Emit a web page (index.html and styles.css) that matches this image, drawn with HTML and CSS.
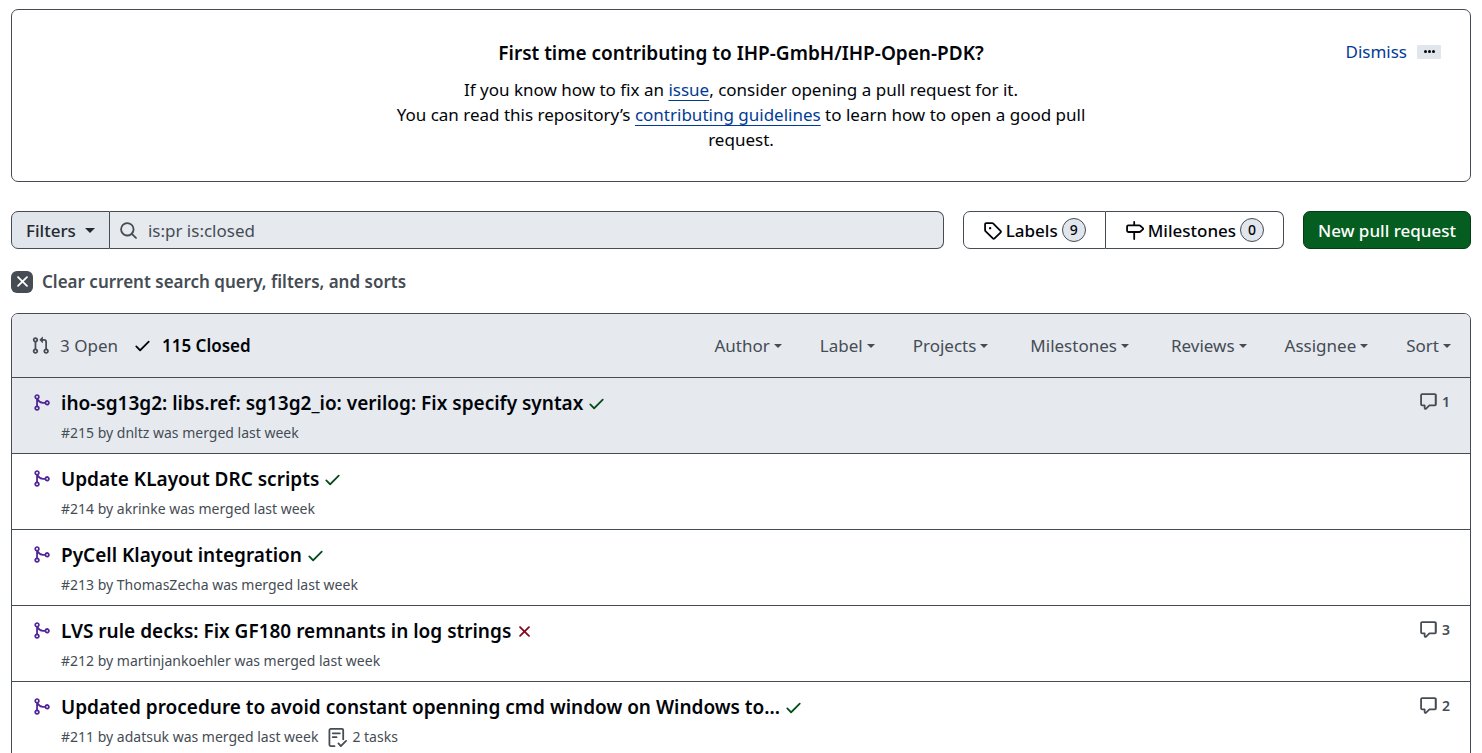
FILE: index.html
```html
<!DOCTYPE html>
<html lang="en">
<head>
<meta charset="utf-8">
<title>Pull requests · IHP-GmbH/IHP-Open-PDK</title>
<link rel="stylesheet" href="styles.css">
</head>
<body>
<svg class="sprite" aria-hidden="true">
  <symbol id="tag" viewBox="0 0 16 16"><path d="M1 7.775V2.75C1 1.784 1.784 1 2.75 1h5.025c.464 0 .91.184 1.238.513l6.25 6.25a1.75 1.75 0 0 1 0 2.474l-5.026 5.026a1.75 1.75 0 0 1-2.474 0l-6.25-6.25A1.752 1.752 0 0 1 1 7.775Zm1.5 0c0 .066.026.13.073.177l6.25 6.25a.25.25 0 0 0 .354 0l5.025-5.025a.25.25 0 0 0 0-.354l-6.25-6.25a.25.25 0 0 0-.177-.073H2.75a.25.25 0 0 0-.25.25ZM6 5a1 1 0 1 1 0 2 1 1 0 0 1 0-2Z"/></symbol>
  <symbol id="milestone" viewBox="0 0 16 16"><path d="M7.75 0a.75.75 0 0 1 .75.75V3h3.634c.414 0 .814.147 1.13.414l2.07 1.75a1.75 1.75 0 0 1 0 2.672l-2.07 1.75a1.75 1.75 0 0 1-1.13.414H8.5v5.25a.75.75 0 0 1-1.5 0V10H2.75A1.75 1.75 0 0 1 1 8.25v-3.5C1 3.784 1.784 3 2.75 3H7V.75A.75.75 0 0 1 7.75 0Zm4.384 8.5a.25.25 0 0 0 .161-.06l2.07-1.75a.248.248 0 0 0 0-.38l-2.07-1.75a.25.25 0 0 0-.161-.06H2.75a.25.25 0 0 0-.25.25v3.5c0 .138.112.25.25.25h9.384Z"/></symbol>
  <symbol id="search" viewBox="0 0 16 16"><path d="M10.68 11.74a6 6 0 0 1-7.922-8.982 6 6 0 0 1 8.982 7.922l3.04 3.04a.749.749 0 0 1-.326 1.275.749.749 0 0 1-.734-.215ZM11.5 7a4.499 4.499 0 1 0-8.997 0A4.499 4.499 0 0 0 11.5 7Z"/></symbol>
  <symbol id="x" viewBox="0 0 16 16"><path d="M3.72 3.72a.75.75 0 0 1 1.06 0L8 6.94l3.22-3.22a.749.749 0 0 1 1.275.326.749.749 0 0 1-.215.734L9.06 8l3.22 3.22a.749.749 0 0 1-.326 1.275.749.749 0 0 1-.734-.215L8 9.06l-3.22 3.22a.751.751 0 0 1-1.042-.018.751.751 0 0 1-.018-1.042L6.94 8 3.72 4.78a.75.75 0 0 1 0-1.06Z"/></symbol>
  <symbol id="check" viewBox="0 0 16 16"><path d="M13.78 4.22a.75.75 0 0 1 0 1.06l-7.25 7.25a.75.75 0 0 1-1.06 0L2.22 9.28a.751.751 0 0 1 .018-1.042.751.751 0 0 1 1.042-.018L6 10.94l6.72-6.72a.75.75 0 0 1 1.06 0Z"/></symbol>
  <symbol id="pull" viewBox="0 0 16 16"><path d="M1.5 3.25a2.25 2.25 0 1 1 3 2.122v5.256a2.251 2.251 0 1 1-1.5 0V5.372A2.25 2.25 0 0 1 1.5 3.25Zm5.677-.177L9.573.677A.25.25 0 0 1 10 .854V2.5h1A2.5 2.5 0 0 1 13.5 5v5.628a2.251 2.251 0 1 1-1.5 0V5a1 1 0 0 0-1-1h-1v1.646a.25.25 0 0 1-.427.177L7.177 3.427a.25.25 0 0 1 0-.354ZM3.75 2.5a.75.75 0 1 0 0 1.5.75.75 0 0 0 0-1.5Zm0 9.5a.75.75 0 1 0 0 1.5.75.75 0 0 0 0-1.5Zm8.25.75a.75.75 0 1 0 1.5 0 .75.75 0 0 0-1.5 0Z"/></symbol>
  <symbol id="merge" viewBox="0 0 16 16"><path d="M5.45 5.154A4.25 4.25 0 0 0 9.25 7.5h1.378a2.251 2.251 0 1 1 0 1.5H9.25A5.734 5.734 0 0 1 5 7.123v3.505a2.25 2.25 0 1 1-1.5 0V5.372a2.25 2.25 0 1 1 1.95-.218ZM4.25 13.5a.75.75 0 1 0 0-1.5.75.75 0 0 0 0 1.5Zm8.5-4.5a.75.75 0 1 0 0-1.5.75.75 0 0 0 0 1.5ZM5 3.25a.75.75 0 1 0 0 .005V3.25Z"/></symbol>
  <symbol id="comment" viewBox="0 0 16 16"><path d="M1 2.75C1 1.784 1.784 1 2.75 1h10.5c.966 0 1.75.784 1.75 1.75v7.5A1.75 1.75 0 0 1 13.25 12H9.06l-2.573 2.573A1.458 1.458 0 0 1 4 13.543V12H2.75A1.75 1.75 0 0 1 1 10.25Zm1.75-.25a.25.25 0 0 0-.25.25v7.5c0 .138.112.25.25.25h2a.75.75 0 0 1 .75.75v2.19l2.72-2.72a.749.749 0 0 1 .53-.22h4.25a.25.25 0 0 0 .25-.25v-7.5a.25.25 0 0 0-.25-.25Z"/></symbol>
  <symbol id="tasks" viewBox="0 0 16 16"><path d="M5.5 15.2H2.2a1 1 0 0 1-1-1V1.8a1 1 0 0 1 1-1h9.6a1 1 0 0 1 1 1v7.7M4 4.5h6M4 7.7h3.2M8.8 13l2 2.2 4.4-4.4" fill="none" stroke="currentColor" stroke-width="1.5" stroke-linecap="round" stroke-linejoin="round"/></symbol>
</svg>

<section class="notice">
  <div class="notice-actions">
    <button class="link-button" type="button">Dismiss</button>
    <button class="more" type="button" aria-label="More options"><i></i><i></i><i></i></button>
  </div>
  <div class="notice-body">
    <h3>First time contributing to IHP-GmbH/IHP-Open-PDK?</h3>
    <p>If you know how to fix an <a href="#issues">issue</a>, consider opening a pull request for it.</p>
    <p>You can read this repository’s <a href="#contributing">contributing guidelines</a> to learn how to open a good pull request.</p>
  </div>
</section>

<div class="toolbar">
  <form class="search">
    <button class="filters" type="button">Filters <span class="caret"></span></button>
    <div class="search-field">
      <svg class="icon"><use href="#search"/></svg>
      <input type="text" value="is:pr is:closed" aria-label="Search all issues">
    </div>
  </form>
  <nav class="subnav">
    <a href="#labels"><svg class="icon"><use href="#tag"/></svg>Labels <span class="counter">9</span></a>
    <a href="#milestones"><svg class="icon"><use href="#milestone"/></svg>Milestones <span class="counter">0</span></a>
  </nav>
  <button class="primary" type="button">New pull request</button>
</div>

<a class="clear" href="#clear"><span class="clear-icon"><svg class="icon"><use href="#x"/></svg></span>Clear current search query, filters, and sorts</a>

<main class="list">
  <header class="list-head">
    <nav class="states">
      <a href="#open"><svg class="icon"><use href="#pull"/></svg>3 Open</a>
      <a class="selected" href="#closed"><svg class="icon"><use href="#check"/></svg>115 Closed</a>
    </nav>
    <div class="menus">
      <button type="button">Author<span class="caret"></span></button>
      <button type="button">Label<span class="caret"></span></button>
      <button type="button">Projects<span class="caret"></span></button>
      <button class="spaced" type="button">Milestones<span class="caret"></span></button>
      <button type="button">Reviews<span class="caret"></span></button>
      <button type="button">Assignee<span class="caret"></span></button>
      <button type="button">Sort<span class="caret"></span></button>
    </div>
  </header>

  <article class="row active">
    <svg class="icon merged"><use href="#merge"/></svg>
    <div class="row-main">
      <h4><a href="#215">iho-sg13g2: libs.ref: sg13g2_io: verilog: Fix specify syntax</a><svg class="icon pass"><use href="#check"/></svg></h4>
      <p class="meta">#215 by dnltz was merged last week</p>
    </div>
    <a class="comments" href="#215-comments"><svg class="icon"><use href="#comment"/></svg>1</a>
  </article>
  <article class="row">
    <svg class="icon merged"><use href="#merge"/></svg>
    <div class="row-main">
      <h4><a href="#214">Update KLayout DRC scripts</a><svg class="icon pass"><use href="#check"/></svg></h4>
      <p class="meta">#214 by akrinke was merged last week</p>
    </div>
  </article>
  <article class="row">
    <svg class="icon merged"><use href="#merge"/></svg>
    <div class="row-main">
      <h4><a href="#213">PyCell Klayout integration</a><svg class="icon pass"><use href="#check"/></svg></h4>
      <p class="meta">#213 by ThomasZecha was merged last week</p>
    </div>
  </article>
  <article class="row">
    <svg class="icon merged"><use href="#merge"/></svg>
    <div class="row-main">
      <h4><a href="#212">LVS rule decks: Fix GF180 remnants in log strings</a><svg class="icon fail"><use href="#x"/></svg></h4>
      <p class="meta">#212 by martinjankoehler was merged last week</p>
    </div>
    <a class="comments" href="#212-comments"><svg class="icon"><use href="#comment"/></svg>3</a>
  </article>
  <article class="row">
    <svg class="icon merged"><use href="#merge"/></svg>
    <div class="row-main">
      <h4><a href="#211">Updated procedure to avoid constant openning cmd window on Windows to...</a><svg class="icon pass"><use href="#check"/></svg></h4>
      <p class="meta">#211 by adatsuk was merged last week <span class="tasks"><svg class="icon"><use href="#tasks"/></svg>2 tasks</span></p>
    </div>
    <a class="comments" href="#211-comments"><svg class="icon"><use href="#comment"/></svg>2</a>
  </article>
</main>
</body>
</html>
```
FILE: styles.css
```css
:root {
  --fg: #010409;
  --muted: #454c54;
  --border: #454c54;
  --subtle: #e6eaef;
  --control: #e0e6eb;
  --link: #023b95;
}

* { box-sizing: border-box; }

html { overflow: hidden; }

body {
  margin: 0;
  padding: 9px 11px 0;
  background: #fff;
  color: var(--fg);
  font: 17px/25px "Noto Sans", sans-serif;
}

h3, h4, p { margin: 0; }

a { color: inherit; text-decoration: none; }

button, input { font: inherit; color: inherit; }

button { padding: 0; border: 0; background: none; white-space: nowrap; cursor: pointer; }

.sprite { display: none; }

.icon { flex: none; width: 19px; height: 19px; fill: currentColor; }

.caret {
  display: inline-block;
  border: 5px solid transparent;
  border-top-color: currentColor;
  border-bottom: 0;
}

/* Contribution notice */
.notice {
  position: relative;
  padding: 29px 24px 28px;
  border: 1px solid var(--border);
  border-radius: 7px;
}

.notice-body { max-width: 712px; margin: 0 auto; text-align: center; }

.notice-body h3 { margin-bottom: 9px; font-size: 19px; font-weight: 600; line-height: 29px; }

.notice-body p:last-child { margin-bottom: 1px; }

.notice-body a {
  color: var(--link);
  text-decoration: underline;
  text-decoration-thickness: 1px;
  text-underline-offset: 4px;
}

.notice-actions {
  position: absolute;
  top: 29px;
  right: 29px;
  display: flex;
  align-items: center;
  gap: 10px;
}

.link-button { color: var(--link); }

.more {
  display: flex;
  align-items: center;
  justify-content: center;
  gap: 1px;
  width: 24px;
  height: 14px;
  border-radius: 1px;
  background: var(--control);
}

.more i { width: 3px; height: 3px; border-radius: 50%; background: var(--fg); }

/* Search and navigation */
.toolbar { display: flex; margin-top: 29px; height: 38px; }

.search { display: flex; flex: 1; min-width: 0; }

.filters {
  display: flex;
  align-items: center;
  gap: 9px;
  padding: 0 14px;
  border: 1px solid var(--border);
  border-radius: 7px 0 0 7px;
  background: var(--control);
  color: #25292e;
  font-weight: 500;
}

.search-field {
  display: flex;
  flex: 1;
  align-items: center;
  gap: 10px;
  min-width: 0;
  padding-left: 9px;
  border: 1px solid var(--border);
  border-left: 0;
  border-radius: 0 7px 7px 0;
  background: var(--subtle);
  color: var(--muted);
}

.search-field input { flex: 1; min-width: 0; padding: 0; border: 0; outline: 0; background: none; }

.subnav { display: flex; margin: 0 19px; }

.subnav a {
  display: flex;
  align-items: center;
  gap: 4px;
  padding: 0 19px;
  border: 1px solid var(--border);
  font-weight: 500;
}

.subnav a:first-child { border-radius: 7px 0 0 7px; }

.subnav a:last-child { border-left: 0; border-radius: 0 7px 7px 0; }

.counter {
  min-width: 24px;
  height: 24px;
  padding: 0 7px;
  border: 1px solid var(--border);
  border-radius: 12px;
  background: var(--control);
  font-size: 14px;
  line-height: 22px;
  text-align: center;
}

.primary {
  padding: 0 14px;
  border: 1px solid #013d14;
  border-radius: 7px;
  background: #055d20;
  color: #fff;
  font-weight: 500;
}

.clear {
  display: flex;
  align-items: center;
  gap: 9px;
  width: max-content;
  margin-top: 20px;
  color: var(--muted);
  font-weight: 600;
}

.clear-icon {
  display: grid;
  place-items: center;
  width: 22px;
  height: 22px;
  border-radius: 6px;
  background: var(--muted);
  color: #fff;
}

/* Pull request list */
.list {
  margin-top: 19px;
  border: 1px solid var(--border);
  border-radius: 7px 7px 0 0;
  overflow: hidden;
}

.list-head {
  display: flex;
  align-items: center;
  justify-content: space-between;
  padding: 19px;
  background: var(--subtle);
  color: var(--muted);
}

.states { display: flex; gap: 15px; }

.states a { display: flex; align-items: center; gap: 10px; }

.states .selected { color: var(--fg); font-weight: 600; }

.menus { display: flex; gap: 38px; }

.menus .spaced { margin: 0 4px; }

.menus button { display: flex; align-items: center; gap: 4px; }

.menus .caret { border-width: 4px 4px 0; }

.row {
  display: flex;
  align-items: flex-start;
  padding: 11px 20px 9px;
  border-top: 1px solid var(--border);
}

.row.active { background: var(--subtle); }

.row > .icon { margin-top: 4px; }

.merged { color: #512598; }

.pass { color: #024c1a; }

.fail { color: #86061d; }

.row-main { flex: 1; min-width: 0; padding-left: 10px; }

.row h4 {
  display: flex;
  align-items: center;
  gap: 4px;
  font-size: 19px;
  font-weight: 600;
  line-height: 29px;
}

.meta {
  display: flex;
  align-items: center;
  gap: 10px;
  margin-top: 4px;
  color: var(--muted);
  font-size: 14px;
  line-height: 22px;
}

.tasks { display: flex; align-items: center; gap: 5px; }

.comments {
  display: flex;
  align-items: center;
  gap: 4px;
  color: var(--muted);
  font-size: 14px;
  font-weight: 600;
}
```
